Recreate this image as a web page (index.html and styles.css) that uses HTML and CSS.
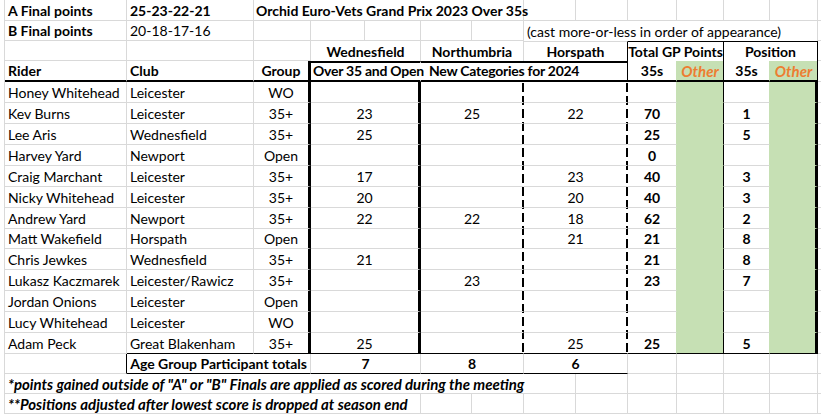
FILE: index.html
```html
<!DOCTYPE html>
<html lang="en">
<head>
<meta charset="utf-8">
<title>Orchid Euro-Vets Grand Prix 2023 Over 35s</title>
<link rel="stylesheet" href="styles.css">
</head>
<body>
<div class="sheet">
  <!-- row 1 -->
  <div class="c b">A Final points</div>
  <div class="c b">25-23-22-21</div>
  <div class="c b s5 pc">Orchid Euro-Vets Grand Prix 2023 Over 35s</div>
  <div class="c"></div><div class="c"></div><div class="c"></div><div class="c"></div><div class="c"></div><div class="c"></div><div class="c"></div>

  <!-- row 2 -->
  <div class="c b">B Final points</div>
  <div class="c">20-18-17-16</div>
  <div class="c"></div><div class="c"></div><div class="c"></div><div class="c"></div><div class="c"></div>
  <div class="c s6 nb">(cast more-or-less in order of appearance)</div>
  <div class="c"></div>

  <!-- row 3 -->
  <div class="c"></div><div class="c"></div><div class="c"></div>
  <div class="c b ctr s2 nb">Wednesfield</div>
  <div class="c b ctr s2 nb">Northumbria</div>
  <div class="c b ctr s2 nb gT blR">Horspath</div>
  <div class="c b ctr s2 nb blT blR">Total GP Points</div>
  <div class="c b ctr s2 nb blT blR">Position</div>
  <div class="c"></div>

  <!-- row 4 -->
  <div class="c b tkB">Rider</div>
  <div class="c b tkB">Club</div>
  <div class="c b ctr tkB tkR">Group</div>
  <div class="c b s2 tkT tkB nr p2 tight">Over 35 and Open</div>
  <div class="c b s4 tkT tkB blR p7 tight">New Categories for 2024</div>
  <div class="c b ctr gR tkB">35s</div>
  <div class="c oth ctr grn blR tkB">Other</div>
  <div class="c b ctr gR tkB">35s</div>
  <div class="c oth ctr grn blR tkB">Other</div>
  <div class="c"></div>

  <!-- data rows -->
  <div class="c">Honey Whitehead</div><div class="c">Leicester</div><div class="c ctr tkR">WO</div>
  <div class="c ctr s2 tkR"></div><div class="c ctr s2 d1"></div><div class="c ctr s2 d2"></div>
  <div class="c b ctr gR"></div><div class="c grn blR"></div><div class="c b ctr gR"></div><div class="c grn tkR"></div><div class="c"></div>

  <div class="c">Kev Burns</div><div class="c">Leicester</div><div class="c ctr tkR">35+</div>
  <div class="c ctr s2 tkR">23</div><div class="c ctr s2 d1">25</div><div class="c ctr s2 d2">22</div>
  <div class="c b ctr gR">70</div><div class="c grn blR"></div><div class="c b ctr gR">1</div><div class="c grn tkR"></div><div class="c"></div>

  <div class="c">Lee Aris</div><div class="c">Wednesfield</div><div class="c ctr tkR">35+</div>
  <div class="c ctr s2 tkR">25</div><div class="c ctr s2 d1"></div><div class="c ctr s2 d2"></div>
  <div class="c b ctr gR">25</div><div class="c grn blR"></div><div class="c b ctr gR">5</div><div class="c grn tkR"></div><div class="c"></div>

  <div class="c">Harvey Yard</div><div class="c">Newport</div><div class="c ctr tkR">Open</div>
  <div class="c ctr s2 tkR"></div><div class="c ctr s2 d1"></div><div class="c ctr s2 d2"></div>
  <div class="c b ctr gR">0</div><div class="c grn blR"></div><div class="c b ctr gR"></div><div class="c grn tkR"></div><div class="c"></div>

  <div class="c">Craig Marchant</div><div class="c">Leicester</div><div class="c ctr tkR">35+</div>
  <div class="c ctr s2 tkR">17</div><div class="c ctr s2 d1"></div><div class="c ctr s2 d2">23</div>
  <div class="c b ctr gR">40</div><div class="c grn blR"></div><div class="c b ctr gR">3</div><div class="c grn tkR"></div><div class="c"></div>

  <div class="c">Nicky Whitehead</div><div class="c">Leicester</div><div class="c ctr tkR">35+</div>
  <div class="c ctr s2 tkR">20</div><div class="c ctr s2 d1"></div><div class="c ctr s2 d2">20</div>
  <div class="c b ctr gR">40</div><div class="c grn blR"></div><div class="c b ctr gR">3</div><div class="c grn tkR"></div><div class="c"></div>

  <div class="c">Andrew Yard</div><div class="c">Newport</div><div class="c ctr tkR">35+</div>
  <div class="c ctr s2 tkR">22</div><div class="c ctr s2 d1">22</div><div class="c ctr s2 d2">18</div>
  <div class="c b ctr gR">62</div><div class="c grn blR"></div><div class="c b ctr gR">2</div><div class="c grn tkR"></div><div class="c"></div>

  <div class="c">Matt Wakefield</div><div class="c">Horspath</div><div class="c ctr tkR">Open</div>
  <div class="c ctr s2 tkR"></div><div class="c ctr s2 d1"></div><div class="c ctr s2 d2">21</div>
  <div class="c b ctr gR">21</div><div class="c grn blR"></div><div class="c b ctr gR">8</div><div class="c grn tkR"></div><div class="c"></div>

  <div class="c">Chris Jewkes</div><div class="c">Wednesfield</div><div class="c ctr tkR">35+</div>
  <div class="c ctr s2 tkR">21</div><div class="c ctr s2 d1"></div><div class="c ctr s2 d2"></div>
  <div class="c b ctr gR">21</div><div class="c grn blR"></div><div class="c b ctr gR">8</div><div class="c grn tkR"></div><div class="c"></div>

  <div class="c">Lukasz Kaczmarek</div><div class="c">Leicester/Rawicz</div><div class="c ctr tkR">35+</div>
  <div class="c ctr s2 tkR"></div><div class="c ctr s2 d1">23</div><div class="c ctr s2 d2"></div>
  <div class="c b ctr gR">23</div><div class="c grn blR"></div><div class="c b ctr gR">7</div><div class="c grn tkR"></div><div class="c"></div>

  <div class="c">Jordan Onions</div><div class="c">Leicester</div><div class="c ctr tkR">Open</div>
  <div class="c ctr s2 tkR"></div><div class="c ctr s2 d1"></div><div class="c ctr s2 d2"></div>
  <div class="c b ctr gR"></div><div class="c grn blR"></div><div class="c b ctr gR"></div><div class="c grn tkR"></div><div class="c"></div>

  <div class="c">Lucy Whitehead</div><div class="c">Leicester</div><div class="c ctr tkR">WO</div>
  <div class="c ctr s2 tkR"></div><div class="c ctr s2 d1"></div><div class="c ctr s2 d2"></div>
  <div class="c b ctr gR"></div><div class="c grn blR"></div><div class="c b ctr gR"></div><div class="c grn tkR"></div><div class="c"></div>

  <div class="c">Adam Peck</div><div class="c blB">Great Blakenham</div><div class="c ctr tkR blB">35+</div>
  <div class="c ctr s2 tkR blB">25</div><div class="c ctr s2 d1 blB"></div><div class="c ctr s2 d2 blB">25</div>
  <div class="c b ctr gR blB">25</div><div class="c grn blR blB"></div><div class="c b ctr gR blB">5</div><div class="c grn tkR blB"></div><div class="c"></div>

  <!-- row 18 -->
  <div class="c blR"></div>
  <div class="c b rt s2 blB">Age Group Participant totals</div>
  <div class="c b ctr s2 blB">7</div>
  <div class="c b ctr s2 blB">8</div>
  <div class="c b ctr s2 blB">6</div>
  <div class="c"></div><div class="c"></div><div class="c"></div><div class="c"></div><div class="c"></div>

  <!-- row 19 -->
  <div class="c bi s8">*points gained outside of "A" or "B" Finals are applied as scored during the meeting</div>
  <div class="c"></div><div class="c"></div><div class="c"></div><div class="c"></div><div class="c"></div><div class="c"></div>

  <!-- row 20 -->
  <div class="c bi s5">**Positions adjusted after lowest score is dropped at season end</div>
  <div class="c"></div><div class="c"></div><div class="c"></div><div class="c"></div><div class="c"></div><div class="c"></div><div class="c"></div><div class="c"></div><div class="c"></div>
</div>
</body>
</html>
```

FILE: styles.css
```css
:root {
  --grid: #d9d9d9;
  --green: #c6e0b4;
  --orange: #ed7d31;
}

html, body {
  margin: 0;
  padding: 0;
  background: #fff;
  overflow: hidden;
}

body {
  font-family: Lato, "Liberation Sans", sans-serif;
  font-size: 14px;
  color: #000;
}

.sheet {
  display: grid;
  margin-left: 4px;
  border-left: 1px solid var(--grid);
  grid-template-columns: 122px 127px 57px 54px 56px 51px 52px 52px 52px 49px 47px 46px 48px 1fr;
  grid-template-rows: 21px 20px 20px 21px repeat(7, 21px) 20px repeat(5, 21px) 20px 20px 20px;
}

.c {
  box-sizing: border-box;
  display: flex;
  align-items: flex-end;
  justify-content: flex-start;
  padding: 0 3px 1px;
  border-right: 1px solid var(--grid);
  border-bottom: 1px solid var(--grid);
  white-space: nowrap;
  min-width: 0;
  line-height: 16px;
}

.s2 { grid-column: span 2; }
.s4 { grid-column: span 4; }
.s5 { grid-column: span 5; }
.s6 { grid-column: span 6; }
.s8 { grid-column: span 8; }

.ctr { justify-content: center; }
.rt { justify-content: flex-end; }
.pc { padding-left: 2px; }
.p2 { padding-left: 2px; }
.p7 { padding-left: 8px; }
.tight { letter-spacing: -0.25px; }

.b { font-weight: 700; }
.bi { font-weight: 700; font-style: italic; font-size: 15px; }
.oth { font-weight: 700; font-style: italic; font-size: 15px; color: var(--orange); }

.grn {
  background-color: var(--green);
  border-right-color: var(--green);
  border-bottom-color: var(--green);
}
.gR { border-right-color: var(--green); }
.nr { border-right-color: transparent; }
.nb { border-bottom: none; }
.gT { border-top: 1px solid var(--grid); }

.blR { border-right: 1px solid #000; }
.blT { border-top: 1px solid #000; }
.blB { border-bottom: 1px solid #000; }
.tkR { border-right: 3px solid #000; }
.tkT { border-top: 2px solid #000; }
.tkB { border-bottom: 2px solid #000; }

.d1, .d2 {
  border-right-color: transparent;
  background-image: linear-gradient(#000 0 9px, transparent 9px);
  background-size: 2px 13px;
  background-repeat: repeat-y;
  background-attachment: fixed;
}
.d1 { background-position: 522px 83px; }
.d2 { background-position: 626px 83px; }
```
